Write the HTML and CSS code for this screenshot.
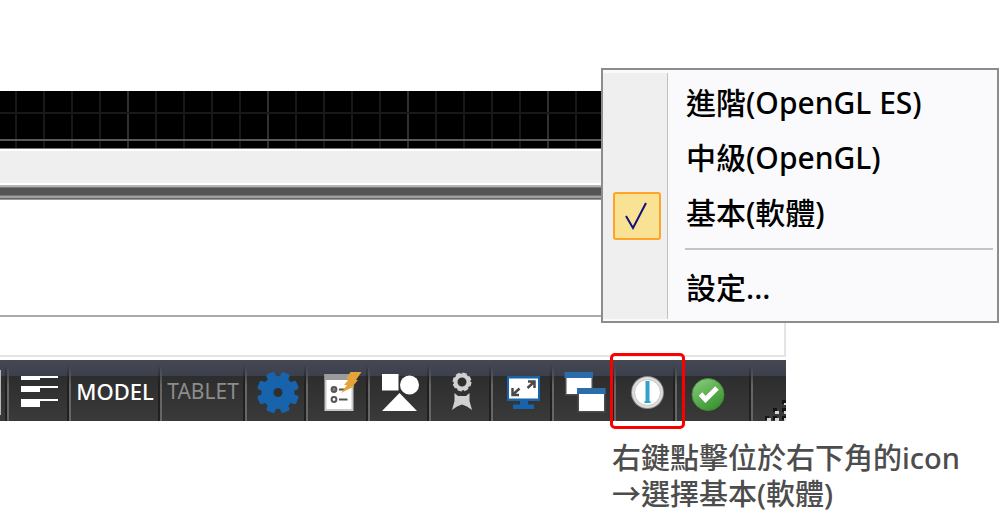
FILE: index.html
```html
<!DOCTYPE html>
<html lang="zh-Hant">
<head>
    <meta charset="UTF-8">
    <meta name="viewport" content="width=device-width, initial-scale=1.0">
    <title>OpenGL</title>
    <link rel="stylesheet" href="styles.css">
</head>
<body>
    <main class="page">
        <section class="workspace">
            <div class="canvas"></div>
            <div class="tab-strip"></div>
            <div class="splitter"></div>
            <div class="command">
                <div class="history"></div>
                <div class="prompt"></div>
            </div>
            <div class="status-bar">
                <div class="edge"></div>
                <button class="cell" aria-label="Lineweight">
                    <svg width="61" height="61" viewBox="0 0 61 61" fill="#fff">
                        <path d="M13 16H50V18H32V20H13ZM13 26H50V28H32V32H13ZM13 39H50V41H32V47H13Z"/>
                    </svg>
                </button>
                <button class="cell model">MODEL</button>
                <button class="cell tablet">TABLET</button>
                <button class="cell" aria-label="Workspace">
                    <svg width="61" height="61" viewBox="0 0 61 61">
                        <g fill="#1763ac" transform="translate(32 32.5)">
                            <circle r="16.5"/>
                            <rect x="-4.5" y="-21" width="9" height="42" rx="2" transform="rotate(22.5)"/>
                            <rect x="-4.5" y="-21" width="9" height="42" rx="2" transform="rotate(67.5)"/>
                            <rect x="-4.5" y="-21" width="9" height="42" rx="2" transform="rotate(112.5)"/>
                            <rect x="-4.5" y="-21" width="9" height="42" rx="2" transform="rotate(157.5)"/>
                            <circle r="4.5" fill="#303030"/>
                        </g>
                    </svg>
                </button>
                <button class="cell" aria-label="Quick properties">
                    <svg width="61" height="61" viewBox="0 0 61 61">
                        <path d="M17.5 14H46.5V51H17.5Z" fill="#c9c9c9"/>
                        <path d="M17.5 14H46.5V20H17.5Z" fill="#9b9b9b"/>
                        <path d="M19.5 20H44.5V49H19.5Z" fill="#fff"/>
                        <g fill="none" stroke="#555" stroke-width="2">
                            <circle cx="27" cy="29.5" r="2.4" fill="#888"/>
                            <circle cx="27" cy="39.5" r="2.4"/>
                            <path d="M32 29.5H38M32 39.5H40.5"/>
                        </g>
                        <path d="M43.5 12H54.5L49 20H51L46 26H48L34 33L40 25H37L42 19H39Z" fill="#e5a33a"/>
                    </svg>
                </button>
                <button class="cell" aria-label="Entity display">
                    <svg width="61" height="61" viewBox="0 0 61 61" fill="#fff">
                        <path d="M13 14H29.5V30.5H13Z"/>
                        <circle cx="40.5" cy="25" r="9.5"/>
                        <path d="M30.5 33L48 51H13Z"/>
                    </svg>
                </button>
                <button class="cell" aria-label="Annotation">
                    <svg width="61" height="61" viewBox="0 0 61 61">
                        <g fill="#d0d0d0">
                            <circle cx="32" cy="22" r="8.5" fill="none" stroke="#d0d0d0" stroke-width="2" stroke-dasharray="4.5 2.2"/>
                            <circle cx="32" cy="22" r="6.5" fill="none" stroke="#d0d0d0" stroke-width="4"/>
                            <path d="M24.5 33L28 36H36L39.5 33V41L42 50L37 46.5L32 44.5L27 46.5L22 50L24.5 41Z"/>
                        </g>
                    </svg>
                </button>
                <button class="cell" aria-label="Full screen">
                    <svg width="61" height="61" viewBox="0 0 61 61">
                        <path d="M15 16H48V41H36V44.5H42V49H21V44.5H28V41H15Z" fill="#1763ac"/>
                        <path d="M17 18.5H46V38.5H17Z" fill="#fff"/>
                        <g fill="none" stroke="#4a4a4a" stroke-width="2.5">
                            <path d="M36 21.5H42.5V28M42 22L35.5 28"/>
                            <path d="M20.5 28V35H27M21 34.5L27.5 28.5"/>
                        </g>
                    </svg>
                </button>
                <button class="cell" aria-label="Windows">
                    <svg width="61" height="61" viewBox="0 0 61 61">
                        <path d="M12 12H40V35.5H12Z" fill="#4d4d4d"/>
                        <path d="M13.5 18H38.5V34H13.5Z" fill="#fff"/>
                        <path d="M11.5 12H40V18H11.5Z" fill="#2b6cab"/>
                        <path d="M24.5 28H52.5V52.5H24.5Z" fill="#4d4d4d"/>
                        <path d="M26 34H51V51H26Z" fill="#fff"/>
                        <path d="M24 28H52.5V34H24Z" fill="#2b6cab"/>
                    </svg>
                </button>
                <button class="cell marked" aria-label="OpenGL">
                    <svg width="61" height="61" viewBox="0 0 61 61">
                        <circle cx="32.5" cy="32.5" r="16.5" fill="#8b8b8b"/>
                        <circle cx="32.5" cy="32.5" r="15.5" fill="#dedede"/>
                        <circle cx="32.5" cy="32.5" r="13" fill="#fff" stroke="#c4c4c4" stroke-width="1"/>
                        <path d="M30.5 21H34.5V41H35.5V43H29.5V41H30.5Z" fill="#2fa3c9"/>
                    </svg>
                </button>
                <button class="cell check" aria-label="Status">
                    <svg width="76" height="61" viewBox="0 0 76 61">
                        <defs>
                            <linearGradient id="green" x1="0" y1="0" x2="0.6" y2="1">
                                <stop offset="0" stop-color="#8ccf80"/>
                                <stop offset="1" stop-color="#3a9631"/>
                            </linearGradient>
                        </defs>
                        <circle cx="32" cy="34.5" r="16" fill="url(#green)" stroke="#3f8c38" stroke-width="1"/>
                        <path d="M24.5 34L29.5 39.5L41 28" fill="none" stroke="#fff" stroke-width="5"/>
                    </svg>
                </button>
                <div class="grip">
                    <svg width="21" height="21" viewBox="0 0 21 21">
                        <path d="M17 0H21V4H17ZM8 8H12V12H8ZM17 8H21V12H17ZM0 16H4V20H0ZM8 16H12V20H8ZM17 16H21V20H17Z" fill="#151515"/>
                        <path d="M19 3H21V5H19ZM10 11H14V14H10ZM19 11H21V14H19ZM2 18H6V21H2ZM10 18H14V21H10ZM19 18H21V21H19Z" fill="#d5d5d5"/>
                    </svg>
                </div>
            </div>
        </section>

        <p class="caption">右鍵點擊位於右下角的icon<br>→選擇基本(軟體)</p>

        <div class="menu" role="menu">
            <button class="item" role="menuitemradio" aria-checked="false">
                <span class="mark"></span>
                <span>進階(OpenGL ES)</span>
            </button>
            <button class="item" role="menuitemradio" aria-checked="false">
                <span class="mark"></span>
                <span>中級(OpenGL)</span>
            </button>
            <button class="item" role="menuitemradio" aria-checked="true">
                <span class="mark checked">
                    <svg width="24" height="28" viewBox="0 0 24 28">
                        <path d="M1 14L8 26L21 1" fill="none" stroke="#10107c" stroke-width="2"/>
                    </svg>
                </span>
                <span>基本(軟體)</span>
            </button>
            <hr class="divider">
            <button class="item" role="menuitem">
                <span class="mark"></span>
                <span>設定...</span>
            </button>
        </div>
    </main>
</body>
</html>
```
FILE: styles.css
```css
*,
*::before,
*::after {
    box-sizing: border-box;
}
body {
    margin: 0;
    background-color: #ffffff;
    font-family: "Noto Sans", "Noto Sans CJK TC", sans-serif;
}
button {
    margin: 0;
    padding: 0;
    border: 0;
    background: none;
    font-family: inherit;
    cursor: pointer;
}
svg {
    display: block;
}
.page {
    position: relative;
    padding-top: 91px;
}
.workspace {
    margin-right: 214px;
}

/* Drawing area with its grid */
.canvas {
    height: 58px;
    border-bottom: 1px solid #777777;
    background-color: #000000;
    background-image:
        linear-gradient(#585858, #585858),
        linear-gradient(#181818, #181818),
        linear-gradient(90deg, #303030 2px, transparent 2px),
        linear-gradient(90deg, #181818 2px, transparent 2px);
    background-size: 100% 2px, 100% 2px, 140px 100%, 28px 100%;
    background-position: 0 48px, 0 21px, 127px 0, 15px 0;
    background-repeat: no-repeat, no-repeat, repeat, repeat;
}
.tab-strip {
    height: 36px;
    border-top: 2px solid #ffffff;
    border-bottom: 2px solid #ffffff;
    background-color: #efefef;
}
.splitter {
    height: 15px;
    background-image: linear-gradient(#b4b4b4 2px, #777777 2px, #777777 3px, #545454 3px, #545454 10px, #777777 10px, #777777 11px, #a0a0a0 11px, #a0a0a0 13px, #666666 13px, #666666 14px, #999999 14px);
}
.command {
    border-right: 2px solid #e4e4e4;
    border-bottom: 2px solid #e4e4e4;
    margin-bottom: 3px;
}
.history {
    height: 117px;
    border-bottom: 2px solid #ababab;
}
.prompt {
    height: 38px;
}

/* Status bar */
.status-bar {
    display: flex;
    height: 61px;
    border-top: 1px solid #484848;
    background-image: linear-gradient(#434854, #3c404c 15px, #2d2d2d 15px, #3a3a3a);
}
.cell {
    position: relative;
    flex: 1;
    color: #ffffff;
    font-size: 22px;
    font-weight: 500;
}
.cell svg {
    margin-top: -1px;
}
.cell::before,
.grip::before {
    content: "";
    position: absolute;
    top: 4px;
    bottom: 0;
    left: -3px;
    width: 4px;
    background-image: linear-gradient(90deg, #202020 2px, #666666 2px);
    -webkit-mask-image: linear-gradient(transparent, #000000 20px);
    mask-image: linear-gradient(transparent, #000000 20px);
}
.edge {
    flex: none;
    width: 8px;
    margin: 9px 0 6px;
    border-left: 1px solid #b8b8b8;
}
.cell.model {
    flex: none;
    width: 91px;
}
.cell.tablet {
    flex: none;
    width: 85px;
    color: #8c8c8c;
    font-size: 21px;
    font-weight: 400;
}
.cell.check {
    flex: none;
    width: 76px;
}
.marked::after {
    content: "";
    position: absolute;
    top: -8px;
    left: -5px;
    width: 75px;
    height: 76px;
    border: 3px solid #fb0000;
    border-radius: 5px;
    z-index: 1;
}
.grip {
    position: relative;
    display: flex;
    flex: none;
    width: 34px;
    align-items: flex-end;
    justify-content: flex-end;
}

.caption {
    width: 388px;
    margin: 19px 0 0 auto;
    color: #4d4d4d;
    font-size: 29px;
    font-weight: 500;
    line-height: 36px;
}

/* Context menu */
.menu {
    position: absolute;
    top: 68px;
    right: 1px;
    width: 398px;
    padding: 5px 4px 6px 2px;
    border: 2px solid #8c8c8c;
    background-color: #fafafc;
    background-image: linear-gradient(90deg, #efefef 64px, #c0c0c0 64px, #c0c0c0 65px, transparent 65px);
    background-size: 100% 246px;
    background-position: 0 3px;
    background-repeat: no-repeat;
}
.item {
    display: flex;
    align-items: center;
    width: 100%;
    height: 55px;
    color: #000000;
    font-size: 30px;
    font-weight: 500;
    line-height: 40px;
    text-align: left;
}
.mark {
    display: flex;
    align-items: center;
    justify-content: center;
    width: 48px;
    height: 48px;
    margin: 6px 25px 0 8px;
}
.checked {
    border: 2px solid #ffa329;
    border-radius: 3px;
    background-color: #fae294;
}
.divider {
    margin: 8px 0 10px 80px;
    border: 0;
    border-top: 2px solid #c4c4c4;
}
```
